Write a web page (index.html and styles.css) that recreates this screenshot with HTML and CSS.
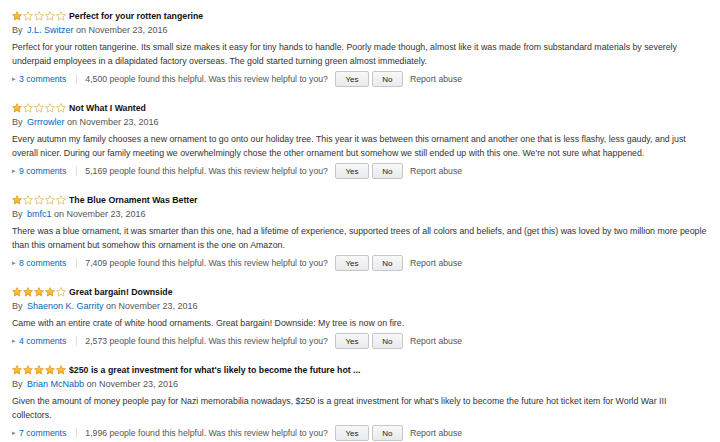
FILE: index.html
```html
<!DOCTYPE html>
<html>
<head>
<meta charset="utf-8">
<link rel="stylesheet" href="styles.css">
</head>
<body>
<svg width="0" height="0" class="defs">
  <defs>
    <linearGradient id="gold" x1="0" y1="0" x2="0" y2="1">
      <stop offset="0" stop-color="#ffd75e"/>
      <stop offset="1" stop-color="#f4a516"/>
    </linearGradient>
    <symbol id="full" viewBox="0 0 20 20">
      <polygon points="10,1.2 12.6,7 19,7.5 14.1,11.7 15.6,18.2 10,14.8 4.4,18.2 5.9,11.7 1,7.5 7.4,7" fill="url(#gold)" stroke="#e08a00" stroke-width="1.3" stroke-linejoin="round"/>
    </symbol>
    <symbol id="empty" viewBox="0 0 20 20">
      <polygon points="10,1.2 12.6,7 19,7.5 14.1,11.7 15.6,18.2 10,14.8 4.4,18.2 5.9,11.7 1,7.5 7.4,7" fill="#fff" stroke="#e3a93a" stroke-width="1.3" stroke-linejoin="round"/>
    </symbol>
  </defs>
</svg>
<div class="reviews">

  <div class="review">
    <div class="title-row">
      <span class="stars"><svg class="star"><use href="#full"/></svg><svg class="star"><use href="#empty"/></svg><svg class="star"><use href="#empty"/></svg><svg class="star"><use href="#empty"/></svg><svg class="star"><use href="#empty"/></svg></span>
      <span class="title">Perfect for your rotten tangerine</span>
    </div>
    <div class="byline">By <a class="link author">J.L. Switzer</a> on November 23, 2016</div>
    <div class="body">Perfect for your rotten tangerine. Its small size makes it easy for tiny hands to handle. Poorly made though, almost like it was made from substandard materials by severely underpaid employees in a dilapidated factory overseas. The gold started turning green almost immediately.</div>
    <div class="actions">
      <span class="arrow">&#9656;</span><a class="link">3 comments</a><span class="sep"></span>
      <span class="helpful">4,500 people found this helpful. Was this review helpful to you?</span>
      <span class="btn yes">Yes</span><span class="btn no">No</span><span class="report">Report abuse</span>
    </div>
  </div>

  <div class="review">
    <div class="title-row">
      <span class="stars"><svg class="star"><use href="#full"/></svg><svg class="star"><use href="#empty"/></svg><svg class="star"><use href="#empty"/></svg><svg class="star"><use href="#empty"/></svg><svg class="star"><use href="#empty"/></svg></span>
      <span class="title">Not What I Wanted</span>
    </div>
    <div class="byline">By <a class="link author">Grrrowler</a> on November 23, 2016</div>
    <div class="body">Every autumn my family chooses a new ornament to go onto our holiday tree. This year it was between this ornament and another one that is less flashy, less gaudy, and just overall nicer. During our family meeting we overwhelmingly chose the other ornament but somehow we still ended up with this one. We're not sure what happened.</div>
    <div class="actions">
      <span class="arrow">&#9656;</span><a class="link">9 comments</a><span class="sep"></span>
      <span class="helpful">5,169 people found this helpful. Was this review helpful to you?</span>
      <span class="btn yes">Yes</span><span class="btn no">No</span><span class="report">Report abuse</span>
    </div>
  </div>

  <div class="review">
    <div class="title-row">
      <span class="stars"><svg class="star"><use href="#full"/></svg><svg class="star"><use href="#empty"/></svg><svg class="star"><use href="#empty"/></svg><svg class="star"><use href="#empty"/></svg><svg class="star"><use href="#empty"/></svg></span>
      <span class="title">The Blue Ornament Was Better</span>
    </div>
    <div class="byline">By <a class="link author">bmfc1</a> on November 23, 2016</div>
    <div class="body">There was a blue ornament, it was smarter than this one, had a lifetime of experience, supported trees of all colors and beliefs, and (get this) was loved by two million more people than this ornament but somehow this ornament is the one on Amazon.</div>
    <div class="actions">
      <span class="arrow">&#9656;</span><a class="link">8 comments</a><span class="sep"></span>
      <span class="helpful">7,409 people found this helpful. Was this review helpful to you?</span>
      <span class="btn yes">Yes</span><span class="btn no">No</span><span class="report">Report abuse</span>
    </div>
  </div>

  <div class="review">
    <div class="title-row">
      <span class="stars"><svg class="star"><use href="#full"/></svg><svg class="star"><use href="#full"/></svg><svg class="star"><use href="#full"/></svg><svg class="star"><use href="#full"/></svg><svg class="star"><use href="#empty"/></svg></span>
      <span class="title">Great bargain! Downside</span>
    </div>
    <div class="byline">By <a class="link author">Shaenon K. Garrity</a> on November 23, 2016</div>
    <div class="body">Came with an entire crate of white hood ornaments. Great bargain! Downside: My tree is now on fire.</div>
    <div class="actions">
      <span class="arrow">&#9656;</span><a class="link">4 comments</a><span class="sep"></span>
      <span class="helpful">2,573 people found this helpful. Was this review helpful to you?</span>
      <span class="btn yes">Yes</span><span class="btn no">No</span><span class="report">Report abuse</span>
    </div>
  </div>

  <div class="review">
    <div class="title-row">
      <span class="stars"><svg class="star"><use href="#full"/></svg><svg class="star"><use href="#full"/></svg><svg class="star"><use href="#full"/></svg><svg class="star"><use href="#full"/></svg><svg class="star"><use href="#full"/></svg></span>
      <span class="title">$250 is a great investment for what's likely to become the future hot ...</span>
    </div>
    <div class="byline">By <a class="link author">Brian McNabb</a> on November 23, 2016</div>
    <div class="body">Given the amount of money people pay for Nazi memorabilia nowadays, $250 is a great investment for what's likely to become the future hot ticket item for World War III collectors.</div>
    <div class="actions">
      <span class="arrow">&#9656;</span><a class="link">7 comments</a><span class="sep"></span>
      <span class="helpful">1,996 people found this helpful. Was this review helpful to you?</span>
      <span class="btn yes">Yes</span><span class="btn no">No</span><span class="report">Report abuse</span>
    </div>
  </div>

</div>
</body>
</html>
```

FILE: styles.css
```css
html, body {
  margin: 0;
  padding: 0;
  background: #fff;
}
body {
  font-family: "Liberation Sans", Arial, sans-serif;
  font-size: 9px;
  color: #333;
}
.defs {
  position: absolute;
  width: 0;
  height: 0;
}
.reviews {
  width: 696px;
  padding: 9px 0 0 12px;
  display: flex;
  flex-direction: column;
  gap: 13px;
}
.review {
  display: flex;
  flex-direction: column;
}
.title-row {
  display: flex;
  align-items: center;
  height: 14px;
}
.stars {
  display: flex;
  gap: 1px;
  margin-right: 3px;
}
.star {
  width: 10px;
  height: 10px;
}
.title {
  font-weight: bold;
  color: #111;
  font-size: 8.75px;
}
.byline {
  line-height: 14px;
  height: 14px;
  color: #555;
}
.link {
  color: #0066c0;
}
.author {
  margin-left: 2px;
}
.body {
  margin-top: 3px;
  line-height: 14px;
  color: #333;
  font-size: 8.8px;
}
.actions {
  margin-top: 2px;
  height: 18px;
  display: flex;
  align-items: center;
  color: #555;
  font-size: 8.7px;
}
.arrow {
  color: #888;
  font-size: 7px;
  margin-right: 3px;
}
.sep {
  width: 1px;
  height: 10px;
  background: #e0e0e0;
  margin: 0 8px 0 10px;
}
.helpful {
  margin-right: 7px;
}
.btn {
  box-sizing: border-box;
  height: 16px;
  display: inline-flex;
  align-items: center;
  justify-content: center;
  border: 1px solid #c5c7cb;
  border-radius: 2px;
  background: linear-gradient(#f8f8f9, #e9eaec);
  color: #222;
  font-size: 8px;
  margin-right: 3px;
}
.yes {
  width: 34px;
}
.no {
  width: 31px;
}
.report {
  margin-left: 4px;
  color: #555;
}
```
